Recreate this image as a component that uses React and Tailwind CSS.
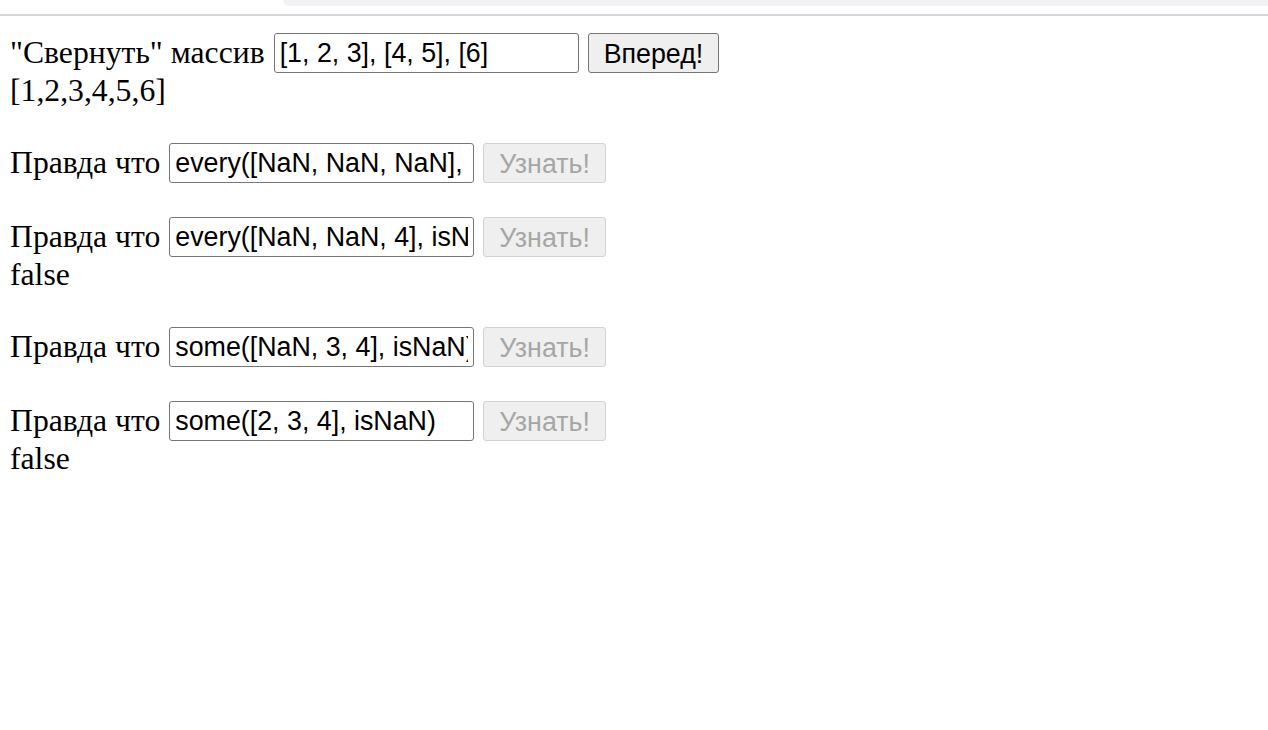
import React from "react";

const serif = { fontFamily: '"Liberation Serif", "Times New Roman", serif' };

function Row({ label, value, button, disabled, output }) {
  return (
    <div className="mb-[34px]">
      <div className="flex items-center h-[40px]">
        <span className="text-[31.7px] leading-none text-black" style={serif}>{label}</span>
        <input
          readOnly
          value={value}
          className="ml-[9px] w-[305px] h-[40px] border border-[#767676] rounded-[3px] px-[5px] text-[26.8px] text-black bg-white outline-none font-['Liberation_Sans',Arial,sans-serif]"
        />
        <button
          disabled={disabled}
          className={
            disabled
              ? "ml-[9px] h-[40px] px-[15px] rounded-[3px] border border-[#d2d2d2] bg-[#efefef] text-[26.8px] text-[#a6a6a6] font-['Liberation_Sans',Arial,sans-serif]"
              : "ml-[9px] h-[40px] px-[15px] rounded-[3px] border border-[#767676] bg-[#efefef] text-[26.8px] text-black font-['Liberation_Sans',Arial,sans-serif]"
          }
        >
          {button}
        </button>
      </div>
      {output && (
        <div className="h-[36px] flex items-center text-[31.7px] text-black" style={serif}>
          {output}
        </div>
      )}
    </div>
  );
}

export default function App() {
  return (
    <div className="w-[1268px] h-[730px] bg-white overflow-hidden">
      <div className="flex h-[14px]">
        <div className="w-[283px]" />
        <div className="flex-1 h-[6px] bg-[#f1f2f4] rounded-bl-[8px]" />
      </div>
      <div className="h-[2px] bg-[#d6d6da]" />
      <div className="px-[10px] pt-[17px]">
        <Row label={'"Свернуть" массив'} value="[1, 2, 3], [4, 5], [6]" button="Вперед!" output="[1,2,3,4,5,6]" />
        <Row label="Правда что" value="every([NaN, NaN, NaN], isNaN)" button="Узнать!" disabled />
        <Row label="Правда что" value="every([NaN, NaN, 4], isNaN)" button="Узнать!" disabled output="false" />
        <Row label="Правда что" value="some([NaN, 3, 4], isNaN)" button="Узнать!" disabled />
        <Row label="Правда что" value="some([2, 3, 4], isNaN)" button="Узнать!" disabled output="false" />
      </div>
    </div>
  );
}
